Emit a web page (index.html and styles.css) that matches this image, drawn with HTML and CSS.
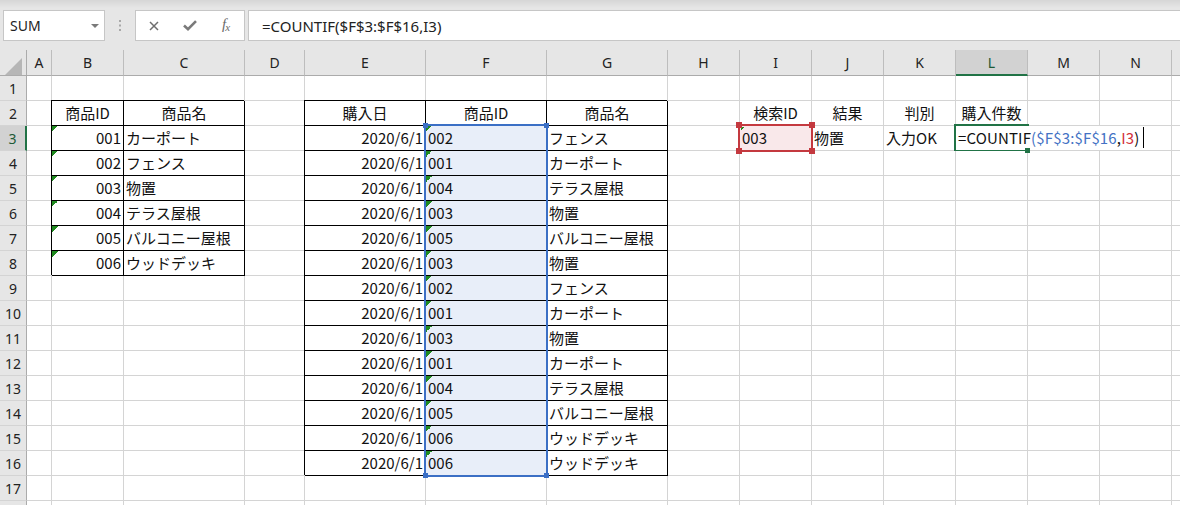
FILE: index.html
```html
<!DOCTYPE html>
<html lang="ja">
<head>
<meta charset="utf-8">
<title>Excel COUNTIF</title>
<link rel="stylesheet" href="styles.css">
</head>
<body>
<div class="app">
  <div class="toolbar">
    <div class="namebox">
      <span>SUM</span>
      <svg class="dd" width="8" height="4" viewBox="0 0 8 4"><path d="M0 0H8L4 4Z" fill="#7a7a7a"/></svg>
    </div>
    <div class="grip">
      <svg width="2" height="11" viewBox="0 0 2 11"><rect x="0" y="0" width="2" height="2" fill="#a8a8a8"/><rect x="0" y="4.5" width="2" height="2" fill="#a8a8a8"/><rect x="0" y="9" width="2" height="2" fill="#a8a8a8"/></svg>
    </div>
    <div class="fbtns">
      <div class="slot"><svg width="10" height="10" viewBox="0 0 10 10"><path d="M1 1L9 9M9 1L1 9" stroke="#6e6e6e" stroke-width="1.5" fill="none"/></svg></div>
      <div class="slot"><svg width="14" height="11" viewBox="0 0 14 11"><path d="M1 5.5L5 9.2L13 1.2" stroke="#7a7a7a" stroke-width="2.6" fill="none"/></svg></div>
      <div class="slot fx"><span class="f">f</span><span class="x">x</span></div>
    </div>
    <div class="fbar">=COUNTIF($F$3:$F$16,I3)</div>
  </div>

  <div class="sheet">
    <div class="row hd">
      <div class="corner"><svg width="17" height="17" viewBox="0 0 17 17"><path d="M17 0V17H0Z" fill="#b6b6b6"/></svg></div>
      <div>A</div><div>B</div><div>C</div><div>D</div><div>E</div><div>F</div><div>G</div><div>H</div><div>I</div><div>J</div><div>K</div><div class="on">L</div><div>M</div><div>N</div><div></div>
    </div>
    <div class="row">
      <div>1</div><div></div><div></div><div></div><div></div><div></div><div></div><div></div><div></div><div></div><div></div><div></div><div></div><div></div><div></div><div></div>
    </div>
    <div class="row">
      <div>2</div><div></div><div class="t c">商品ID</div><div class="t c">商品名</div><div></div><div class="t c">購入日</div><div class="t c">商品ID</div><div class="t c">商品名</div><div></div><div class="c">検索ID</div><div class="c">結果</div><div class="c">判別</div><div class="c">購入件数</div><div></div><div></div><div></div>
    </div>
    <div class="row">
      <div class="on">3</div><div></div><div class="t r n">001</div><div class="t">カーポート</div><div></div><div class="t r">2020/6/1</div><div class="t f n">002</div><div class="t">フェンス</div><div></div><div class="ri">003</div><div>物置</div><div>入力OK</div><div></div><div></div><div></div><div></div>
    </div>
    <div class="row">
      <div>4</div><div></div><div class="t r n">002</div><div class="t">フェンス</div><div></div><div class="t r">2020/6/1</div><div class="t f n">001</div><div class="t">カーポート</div><div></div><div></div><div></div><div></div><div></div><div></div><div></div><div></div>
    </div>
    <div class="row">
      <div>5</div><div></div><div class="t r n">003</div><div class="t">物置</div><div></div><div class="t r">2020/6/1</div><div class="t f n">004</div><div class="t">テラス屋根</div><div></div><div></div><div></div><div></div><div></div><div></div><div></div><div></div>
    </div>
    <div class="row">
      <div>6</div><div></div><div class="t r n">004</div><div class="t">テラス屋根</div><div></div><div class="t r">2020/6/1</div><div class="t f n">003</div><div class="t">物置</div><div></div><div></div><div></div><div></div><div></div><div></div><div></div><div></div>
    </div>
    <div class="row">
      <div>7</div><div></div><div class="t r n">005</div><div class="t">バルコニー屋根</div><div></div><div class="t r">2020/6/1</div><div class="t f n">005</div><div class="t">バルコニー屋根</div><div></div><div></div><div></div><div></div><div></div><div></div><div></div><div></div>
    </div>
    <div class="row">
      <div>8</div><div></div><div class="t r n">006</div><div class="t">ウッドデッキ</div><div></div><div class="t r">2020/6/1</div><div class="t f n">003</div><div class="t">物置</div><div></div><div></div><div></div><div></div><div></div><div></div><div></div><div></div>
    </div>
    <div class="row">
      <div>9</div><div></div><div></div><div></div><div></div><div class="t r">2020/6/1</div><div class="t f n">002</div><div class="t">フェンス</div><div></div><div></div><div></div><div></div><div></div><div></div><div></div><div></div>
    </div>
    <div class="row">
      <div>10</div><div></div><div></div><div></div><div></div><div class="t r">2020/6/1</div><div class="t f n">001</div><div class="t">カーポート</div><div></div><div></div><div></div><div></div><div></div><div></div><div></div><div></div>
    </div>
    <div class="row">
      <div>11</div><div></div><div></div><div></div><div></div><div class="t r">2020/6/1</div><div class="t f n">003</div><div class="t">物置</div><div></div><div></div><div></div><div></div><div></div><div></div><div></div><div></div>
    </div>
    <div class="row">
      <div>12</div><div></div><div></div><div></div><div></div><div class="t r">2020/6/1</div><div class="t f n">001</div><div class="t">カーポート</div><div></div><div></div><div></div><div></div><div></div><div></div><div></div><div></div>
    </div>
    <div class="row">
      <div>13</div><div></div><div></div><div></div><div></div><div class="t r">2020/6/1</div><div class="t f n">004</div><div class="t">テラス屋根</div><div></div><div></div><div></div><div></div><div></div><div></div><div></div><div></div>
    </div>
    <div class="row">
      <div>14</div><div></div><div></div><div></div><div></div><div class="t r">2020/6/1</div><div class="t f n">005</div><div class="t">バルコニー屋根</div><div></div><div></div><div></div><div></div><div></div><div></div><div></div><div></div>
    </div>
    <div class="row">
      <div>15</div><div></div><div></div><div></div><div></div><div class="t r">2020/6/1</div><div class="t f n">006</div><div class="t">ウッドデッキ</div><div></div><div></div><div></div><div></div><div></div><div></div><div></div><div></div>
    </div>
    <div class="row">
      <div>16</div><div></div><div></div><div></div><div></div><div class="t r">2020/6/1</div><div class="t f n">006</div><div class="t">ウッドデッキ</div><div></div><div></div><div></div><div></div><div></div><div></div><div></div><div></div>
    </div>
    <div class="row">
      <div>17</div><div></div><div></div><div></div><div></div><div></div><div></div><div></div><div></div><div></div><div></div><div></div><div></div><div></div><div></div><div></div>
    </div>
    <div class="row">
      <div></div><div></div><div></div><div></div><div></div><div></div><div></div><div></div><div></div><div></div><div></div><div></div><div></div><div></div><div></div><div></div>
    </div>

    <div class="selbox">
      <i class="hdl tl"></i><i class="hdl tr"></i><i class="hdl bl"></i><i class="hdl br"></i>
    </div>
    <div class="refbox">
      <i class="hdl tl"></i><i class="hdl tr"></i><i class="hdl bl"></i><i class="hdl br"></i>
    </div>
    <div class="edit">
      <span class="ftxt">=COUNTIF<span class="rb">($F$3:$F$16</span>,<span class="rr">I3</span>)</span><i class="caret"></i>
      <i class="fillh"></i>
    </div>
  </div>
</div>
</body>
</html>
```

FILE: styles.css
```css
html, body {
  margin: 0;
  padding: 0;
  width: 1180px;
  height: 505px;
  overflow: hidden;
  background: #fff;
}

.app {
  width: 1180px;
  height: 505px;
  overflow: hidden;
}

/* ---------- formula toolbar ---------- */
.toolbar {
  height: 50px;
  box-sizing: border-box;
  padding: 10px 0 0 3px;
  display: flex;
  align-items: flex-start;
  background: linear-gradient(#d6d6d6 0, #e6e6e6 8px);
  font-family: "Noto Sans", "Open Sans", sans-serif;
  color: #222;
}

.namebox {
  width: 102px;
  height: 31px;
  box-sizing: border-box;
  background: #fff;
  border: 1px solid #c6c6c6;
  display: flex;
  align-items: center;
  padding: 0 5px 0 6px;
  font-size: 14px;
}

.namebox .dd {
  margin-left: auto;
}

.grip {
  width: 30px;
  height: 31px;
  display: flex;
  align-items: center;
  justify-content: center;
}

.fbtns {
  width: 110px;
  height: 31px;
  box-sizing: border-box;
  background: #fff;
  border: 1px solid #c6c6c6;
  display: flex;
}

.slot {
  width: 36px;
  display: flex;
  align-items: center;
  justify-content: center;
}

.fx {
  font-family: "Liberation Serif", serif;
  font-style: italic;
  color: #6a6a6a;
  padding-bottom: 2px;
  box-sizing: border-box;
}

.fx .f {
  font-size: 15px;
}

.fx .x {
  font-size: 11px;
  margin-top: 4px;
  margin-left: -1px;
}

.fbar {
  flex: 1;
  height: 31px;
  box-sizing: border-box;
  margin-left: 3px;
  background: #fff;
  border: 1px solid #c6c6c6;
  border-right: 0;
  padding-left: 13px;
  display: flex;
  align-items: center;
  font-size: 15px;
  color: #222;
}

/* ---------- sheet grid ---------- */
.sheet {
  position: relative;
  display: grid;
  grid-template-columns: 27px 25px 72px 121px 60px 121px 121px 121px repeat(8, 72px);
  grid-template-rows: 26px repeat(18, 25px);
}

.row {
  display: contents;
}

.row > div {
  box-sizing: border-box;
  border-right: 1px solid #d4d4d4;
  border-bottom: 1px solid #d4d4d4;
  display: flex;
  align-items: center;
  padding: 0 2px 2px;
  white-space: nowrap;
  overflow: hidden;
  font-family: "Noto Sans CJK JP", "Noto Sans", sans-serif;
  font-size: 15px;
  color: #111;
}

/* row headers */
.row > div:first-child {
  background: #e6e6e6;
  border-right-color: #ababab;
  justify-content: center;
  font-family: "Noto Sans", "Open Sans", sans-serif;
  font-size: 14px;
  color: #222;
  padding: 0;
}

.row > div.on:first-child {
  background: #d2d2d2;
  border-right: 2px solid #217346;
  color: #1e5a36;
}

/* column headers */
.hd > div {
  background: #e6e6e6;
  border-right-color: #bdbdbd;
  border-bottom-color: #ababab;
  justify-content: center;
  font-family: "Noto Sans", "Open Sans", sans-serif;
  font-size: 14px;
  color: #222;
  padding: 0;
}

.hd > div.on {
  background: #d2d2d2;
  border-bottom: 2px solid #217346;
  color: #1e5a36;
}

.hd > .corner {
  align-items: flex-end;
  justify-content: flex-end;
  padding: 0 3px 3px 0;
}

/* cell variants */
.c { justify-content: center; }
.r { justify-content: flex-end; }

.t {
  border-right-color: #000 !important;
  border-bottom-color: #000 !important;
  box-shadow: -1px -1px 0 #000;
}

.n {
  background: linear-gradient(135deg, #1f8a1f 50%, transparent 50%) no-repeat 0 0 / 6px 6px;
}

.n.f {
  background: linear-gradient(135deg, #1f8a1f 50%, transparent 50%) no-repeat 0 0 / 6px 6px, #e8eef9;
}

.ri {
  background: linear-gradient(135deg, #1f8a1f 50%, transparent 50%) no-repeat 1px 1px / 4px 4px, #f9e8ea;
}

/* ---------- overlays ---------- */
.selbox {
  position: absolute;
  grid-column: 7 / 8;
  grid-row: 4 / 18;
  top: -2px;
  left: -2px;
  right: -1px;
  bottom: -1px;
  border: 2px solid #3b6fc5;
}

.selbox .hdl {
  position: absolute;
  width: 5px;
  height: 5px;
  background: #3b6fc5;
}

.selbox .tl { left: -3px; top: -3px; }
.selbox .tr { right: -3px; top: -3px; }
.selbox .bl { left: -3px; bottom: -3px; }
.selbox .br { right: -3px; bottom: -3px; }

.refbox {
  position: absolute;
  grid-column: 10 / 11;
  grid-row: 4 / 5;
  top: -2px;
  left: -2px;
  right: -1px;
  bottom: -1px;
  border: 2px solid #c4393f;
}

.refbox .hdl {
  position: absolute;
  width: 6px;
  height: 6px;
  background: #c4393f;
}

.refbox .tl { left: -4px; top: -4px; }
.refbox .tr { right: -4px; top: -4px; }
.refbox .bl { left: -4px; bottom: -4px; }
.refbox .br { right: -4px; bottom: -4px; }

.edit {
  position: absolute;
  grid-column: 13 / 14;
  grid-row: 4 / 5;
  top: -2px;
  left: -2px;
  right: -1px;
  bottom: 0;
  border: 2px solid #217346;
  border-right: 0;
  display: flex;
  align-items: stretch;
  white-space: nowrap;
  font-family: "Noto Sans CJK JP", "Noto Sans", sans-serif;
  font-size: 15px;
  color: #111;
}

.ftxt {
  flex: none;
  display: flex;
  align-items: center;
  background: #fff;
  padding: 0 3px 2px 2px;
  margin-bottom: -1px;
  letter-spacing: 0.15px;
}

.rb { color: #4472c4; }
.rr { color: #d2323a; }

.caret {
  flex: none;
  align-self: center;
  width: 1px;
  height: 21px;
  background: #000;
  margin-left: 1px;
}

.fillh {
  position: absolute;
  left: 69px;
  top: 22px;
  width: 5px;
  height: 5px;
  background: #217346;
}
```
